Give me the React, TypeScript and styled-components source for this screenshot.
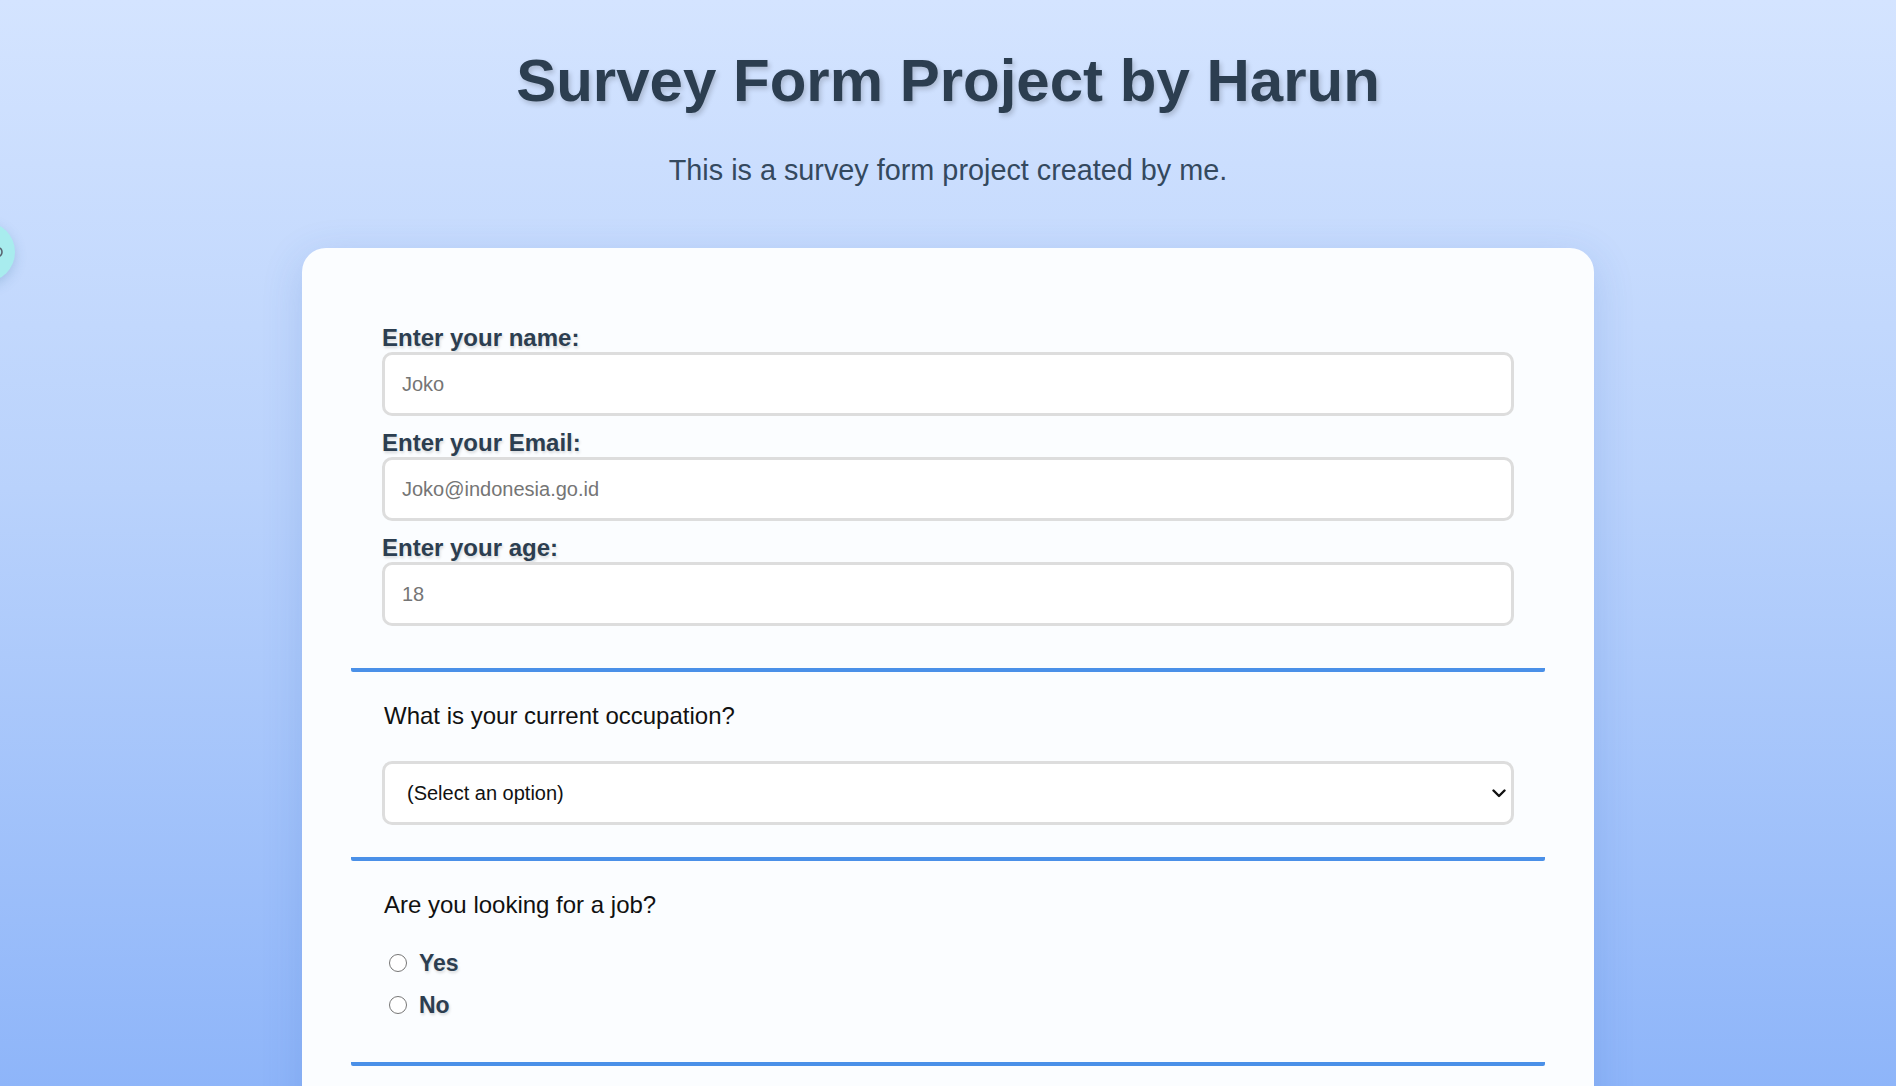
import React from "react";
import styled, { createGlobalStyle } from "styled-components";

const GlobalStyle = createGlobalStyle`
  html, body {
    margin: 0;
    padding: 0;
  }
  body {
    font-family: "Liberation Sans", Arial, Helvetica, sans-serif;
    background: linear-gradient(180deg, #d4e4ff 0%, #b9d2fc 45%, #8eb5f9 100%);
    background-attachment: fixed;
    min-height: 100vh;
    overflow: hidden;
  }
`;

const Page = styled.div`
  min-height: 100vh;
  padding-top: 46px;
  box-sizing: border-box;
`;

const Header = styled.header`
  text-align: center;
`;

const Title = styled.h1`
  margin: 0;
  font-size: 60px;
  line-height: 69px;
  font-weight: 700;
  color: #2c3e50;
  text-shadow: 2px 3px 5px rgba(0, 0, 0, 0.18);
`;

const Subtitle = styled.p`
  margin: 39px 0 0;
  font-size: 28.8px;
  line-height: 33px;
  color: #34495e;
`;

const FloatBubble = styled.div`
  position: fixed;
  left: -45px;
  top: 222px;
  width: 60px;
  height: 60px;
  border-radius: 50%;
  background: #a8ecee;
  box-shadow: 0 4px 12px rgba(60, 120, 160, 0.25);
  display: flex;
  align-items: center;
  justify-content: flex-end;
  padding-right: 12px;
  box-sizing: border-box;
`;

const BubbleIcon = styled.svg`
  width: 10px;
  height: 12px;
`;

const Card = styled.form`
  width: 1292px;
  margin: 61px auto 0;
  box-sizing: border-box;
  padding: 49px 49px 80px;
  background: #fbfdff;
  border-radius: 24px;
  box-shadow: 0 10px 40px rgba(50, 100, 190, 0.18);
`;

const Section = styled.div<{ $top: number; $bottom: number }>`
  padding: ${(p) => p.$top}px 31px ${(p) => p.$bottom}px;
  border-bottom: 4px solid #4a90e8;
  border-radius: 0 0 2px 2px;
`;

const Group = styled.div`
  display: flex;
  flex-direction: column;
  margin-bottom: 13px;
  &:last-child {
    margin-bottom: 0;
  }
`;

const Label = styled.label`
  font-size: 24px;
  line-height: 27px;
  font-weight: 700;
  color: #2c3e50;
  text-shadow: 1px 2px 3px rgba(0, 0, 0, 0.15);
  margin-bottom: 1px;
`;

const TextInput = styled.input`
  height: 64px;
  box-sizing: border-box;
  width: 100%;
  border: 3px solid #dddddd;
  border-radius: 10px;
  padding: 0 17px;
  font-family: "Liberation Sans", Arial, sans-serif;
  font-size: 20px;
  color: #222;
  background: #ffffff;
  outline: none;
  &::placeholder {
    color: #757575;
  }
`;

const Question = styled.p<{ $gap: number }>`
  margin: 0 0 ${(p) => p.$gap}px 2px;
  font-size: 24px;
  line-height: 27px;
  color: #111111;
`;

const SelectWrap = styled.div`
  position: relative;
`;

const Select = styled.select`
  appearance: none;
  -webkit-appearance: none;
  width: 100%;
  height: 64px;
  box-sizing: border-box;
  border: 3px solid #dddddd;
  border-radius: 10px;
  padding: 0 40px 0 22px;
  font-family: "Liberation Sans", Arial, sans-serif;
  font-size: 20px;
  color: #111;
  background: #ffffff;
  outline: none;
`;

const Chevron = styled.svg`
  position: absolute;
  right: 8px;
  top: 50%;
  width: 14px;
  height: 9px;
  margin-top: -4.5px;
  pointer-events: none;
`;

const RadioRow = styled.label`
  display: flex;
  align-items: center;
  height: 42px;
`;

const Radio = styled.input`
  width: 18px;
  height: 18px;
  margin: 0 12px 0 7px;
  accent-color: #4a90e2;
`;

const RadioText = styled.span`
  font-size: 23px;
  font-weight: 700;
  color: #2c3e50;
  text-shadow: 1px 2px 3px rgba(0, 0, 0, 0.15);
`;

const RadioList = styled.div`
  display: flex;
  flex-direction: column;
`;

const fields = [
  { id: "name", label: "Enter your name:", placeholder: "Joko", type: "text" },
  { id: "email", label: "Enter your Email:", placeholder: "Joko@indonesia.go.id", type: "email" },
  { id: "age", label: "Enter your age:", placeholder: "18", type: "number" },
];

export default function App() {
  return (
    <>
      <GlobalStyle />
      <Page>
        <FloatBubble>
          <BubbleIcon viewBox="0 0 10 12" fill="none">
            <path d="M5 1.5 A4 4.5 0 1 1 5 10.5" stroke="#5a6470" strokeWidth="1.6" />
          </BubbleIcon>
        </FloatBubble>
        <Header>
          <Title>Survey Form Project by Harun</Title>
          <Subtitle>This is a survey form project created by me.</Subtitle>
        </Header>
        <Card onSubmit={(e) => e.preventDefault()}>
          <Section $top={27} $bottom={42}>
            {fields.map((f) => (
              <Group key={f.id}>
                <Label htmlFor={f.id}>{f.label}</Label>
                <TextInput id={f.id} type={f.type} placeholder={f.placeholder} />
              </Group>
            ))}
          </Section>
          <Section $top={30} $bottom={32}>
            <Question $gap={32}>What is your current occupation?</Question>
            <SelectWrap>
              <Select defaultValue="">
                <option value="">(Select an option)</option>
                <option value="student">Student</option>
                <option value="worker">Worker</option>
                <option value="other">Other</option>
              </Select>
              <Chevron viewBox="0 0 14 9" fill="none">
                <path d="M1.5 1.5 L7 7 L12.5 1.5" stroke="#111" strokeWidth="2.4" strokeLinecap="round" strokeLinejoin="round" />
              </Chevron>
            </SelectWrap>
          </Section>
          <Section $top={30} $bottom={36}>
            <Question $gap={24}>Are you looking for a job?</Question>
            <RadioList>
              <RadioRow>
                <Radio type="radio" name="job" value="yes" />
                <RadioText>Yes</RadioText>
              </RadioRow>
              <RadioRow>
                <Radio type="radio" name="job" value="no" />
                <RadioText>No</RadioText>
              </RadioRow>
            </RadioList>
          </Section>
        </Card>
      </Page>
    </>
  );
}
